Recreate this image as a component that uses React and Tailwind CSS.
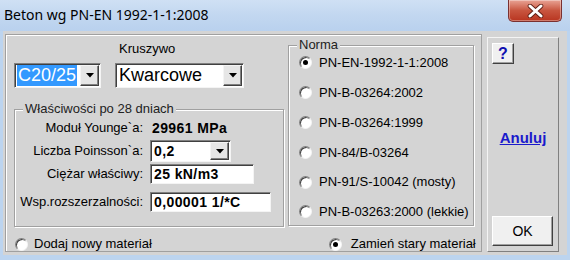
import React from "react";

const F = { fontFamily: '"Liberation Sans", Arial, sans-serif' };

function Radio({ checked }) {
  return (
    <div className="w-[13px] h-[13px] rounded-full bg-white border border-t-[#808080] border-l-[#808080] border-r-[#f4f4f4] border-b-[#f4f4f4] shadow-[inset_1px_1px_0_#404040] flex items-center justify-center shrink-0">
      {checked && <div className="w-[5px] h-[5px] rounded-full bg-black" />}
    </div>
  );
}

function DropBtn() {
  return (
    <div className="w-[19px] h-full bg-[#e6e6e6] border border-t-[#f4f4f4] border-l-[#f4f4f4] border-r-[#404040] border-b-[#404040] shadow-[inset_-1px_-1px_0_#808080] flex items-center justify-center shrink-0">
      <svg width="8" height="5" viewBox="0 0 8 5"><polygon points="0,0 8,0 4,4.5" fill="#000" /></svg>
    </div>
  );
}

function Sunken({ className, children }) {
  return (
    <div className={"bg-white border border-t-[#808080] border-l-[#808080] border-r-[#f4f4f4] border-b-[#f4f4f4] shadow-[inset_1px_1px_0_#404040] flex items-center " + className}>
      {children}
    </div>
  );
}

function Group({ label, className, children }) {
  return (
    <div className={"relative border border-[#a0a0a0] shadow-[inset_1px_1px_0_#fff,1px_1px_0_#fff] " + className}>
      <div className="absolute left-[8px] top-[-9px] px-[2px] bg-[#d4d4d4] text-[13px] leading-[16px] text-[#222]">{label}</div>
      {children}
    </div>
  );
}

export default function App() {
  const norms = [
    ["PN-EN-1992-1-1:2008", true],
    ["PN-B-03264:2002", false],
    ["PN-B-03264:1999", false],
    ["PN-84/B-03264", false],
    ["PN-91/S-10042 (mosty)", false],
    ["PN-B-03263:2000 (lekkie)", false],
  ];
  return (
    <div className="w-[570px] h-[260px] overflow-hidden bg-[#bcd4ef] flex flex-col" style={F}>
      {/* title bar */}
      <div className="h-[31px] shrink-0 flex items-start justify-between bg-gradient-to-b from-[#cfe0f4] via-[#c2d7f0] to-[#b9d1ee]">
        <div className="pl-[4px] pt-[5px] text-[14px] leading-[20px] text-black" style={{ fontFamily: '"Noto Sans", "Open Sans", sans-serif' }}>
          Beton wg PN-EN 1992-1-1:2008
        </div>
        <div className="mr-[8px] w-[54px] h-[22px] rounded-b-[5px] border border-t-0 border-[#7a3030] bg-gradient-to-b from-[#e8a395] via-[#c8553f] to-[#b8341f] shadow-[inset_0_0_0_1px_rgba(255,255,255,0.35)] flex items-center justify-center">
          <svg width="17" height="14" viewBox="0 0 17 14">
            <path d="M3 2 L14 12 M14 2 L3 12" stroke="#5a1a10" strokeWidth="4.6" strokeLinecap="round" />
            <path d="M3 2 L14 12 M14 2 L3 12" stroke="#fff" strokeWidth="3" strokeLinecap="round" />
          </svg>
        </div>
      </div>

      {/* client */}
      <div className="mx-[3px] h-[224px] bg-[#d4d4d4] flex pt-[3px] pl-[2px] text-black">
        {/* left panel */}
        <div className="w-[477px] h-[218px] border border-[#a0a0a0] shadow-[inset_1px_1px_0_#fff] overflow-hidden flex flex-col">
          <div className="flex">
            {/* left column */}
            <div className="pl-[8px] w-[280px] flex flex-col">
              <div className="flex items-end h-[25px]">
                <div className="w-[100px]" />
                <div className="ml-[5px] text-[13px] leading-[16px] pb-[3px]">Kruszywo</div>
              </div>
              <div className="flex mt-[3px] h-[25px]">
                <Sunken className="w-[87px] h-[25px] pl-[2px] pr-[1px] py-[1px]">
                  <div className="bg-[#3399ff] text-white text-[18px] leading-[21px] px-[1px] h-[21px] flex items-center">C20/25</div>
                  <div className="flex-1" />
                  <DropBtn />
                </Sunken>
                <Sunken className="ml-[14px] w-[129px] h-[25px] pl-[3px] pr-[1px] py-[1px]">
                  <div className="text-[18px] leading-[21px]">Kwarcowe</div>
                  <div className="flex-1" />
                  <DropBtn />
                </Sunken>
              </div>
              <Group label="Właściwości po 28 dniach" className="mt-[21px] w-[270px] h-[118px]">
                <div className="pt-[8px] flex flex-col text-[13px]">
                  <div className="flex items-center h-[20px]">
                    <div className="w-[128px] text-right">Moduł Younge`a:</div>
                    <div className="ml-[9px] font-bold text-[14px] tracking-[0.4px]">29961 MPa</div>
                  </div>
                  <div className="flex items-center h-[22px] mt-[2px]">
                    <div className="w-[128px] text-right">Liczba Poinsson`a:</div>
                    <Sunken className="ml-[7px] w-[81px] h-[22px] pl-[3px] pr-[1px] py-[1px]">
                      <div className="font-bold text-[14px] tracking-[0.4px]">0,2</div>
                      <div className="flex-1" />
                      <DropBtn />
                    </Sunken>
                  </div>
                  <div className="flex items-center h-[20px] mt-[2px]">
                    <div className="w-[128px] text-right">Ciężar właściwy:</div>
                    <Sunken className="ml-[7px] w-[104px] h-[20px] pl-[3px]">
                      <div className="font-bold text-[14px] tracking-[0.4px]">25 kN/m3</div>
                    </Sunken>
                  </div>
                  <div className="flex items-center h-[20px] mt-[8px]">
                    <div className="w-[128px] text-right">Wsp.rozszerzalności:</div>
                    <Sunken className="ml-[7px] w-[121px] h-[20px] pl-[3px]">
                      <div className="font-bold text-[14px] tracking-[0.4px]">0,00001 1/*C</div>
                    </Sunken>
                  </div>
                </div>
              </Group>
            </div>
            {/* norma */}
            <Group label="Norma" className="ml-[2px] mt-[10px] w-[186px] h-[181px]">
              <div className="pt-[2px] pl-[10px] flex flex-col">
                {norms.map(([t, c]) => (
                  <div key={t} className="flex items-center h-[29.8px] text-[13px]">
                    <Radio checked={c} />
                    <div className="ml-[7px]">{t}</div>
                  </div>
                ))}
              </div>
            </Group>
          </div>
          <div className="flex items-center h-[18px] mt-[8px] text-[13px]">
            <div className="ml-[9px]"><Radio /></div>
            <div className="ml-[6px]">Dodaj nowy materiał</div>
            <div className="ml-[177px]"><Radio checked /></div>
            <div className="ml-[9px] whitespace-nowrap">Zamień stary materiał</div>
          </div>
        </div>

        {/* right panel */}
        <div className="ml-[5px] mt-[3px] w-[72px] h-[215px] border border-t-[#f4f4f4] border-l-[#f4f4f4] border-r-[#808080] border-b-[#808080] flex flex-col px-[4px] pt-[5px] pb-[4px]">
          <div className="w-[22px] h-[21px] bg-[#f0f0f0] border border-t-[#fff] border-l-[#fff] border-r-[#404040] border-b-[#404040] shadow-[inset_-1px_-1px_0_#a0a0a0] flex items-center justify-center text-[#1010b0] font-bold text-[16px] leading-none">?</div>
          <div className="flex-1 flex items-center justify-center">
            <div className="text-[#1a1acc] underline font-bold text-[15px] -mt-[4px]">Anuluj</div>
          </div>
          <div className="w-[61px] h-[30px] bg-[#f0f0f0] border border-t-[#fff] border-l-[#fff] border-r-[#404040] border-b-[#404040] shadow-[inset_-1px_-1px_0_#a0a0a0] flex items-center justify-center text-[14px] mb-[1px]">OK</div>
        </div>
      </div>
    </div>
  );
}
